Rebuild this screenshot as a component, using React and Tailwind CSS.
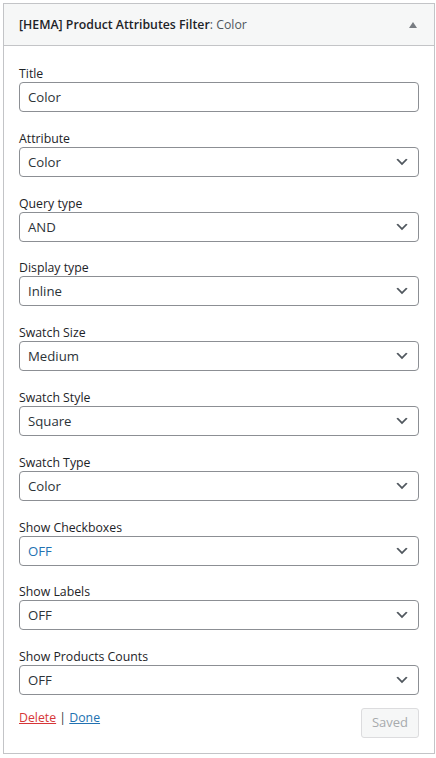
import React from "react";

const fields = [
  { label: "Title", value: "Color", input: true },
  { label: "Attribute", value: "Color" },
  { label: "Query type", value: "AND" },
  { label: "Display type", value: "Inline" },
  { label: "Swatch Size", value: "Medium" },
  { label: "Swatch Style", value: "Square" },
  { label: "Swatch Type", value: "Color" },
  { label: "Show Checkboxes", value: "OFF", active: true },
  { label: "Show Labels", value: "OFF" },
  { label: "Show Products Counts", value: "OFF" },
];

const Chevron = () => (
  <svg width="16" height="16" viewBox="0 0 20 20" className="fill-[#50575e]">
    <path d="M5 6l5 5 5-5 2 1-7 7-7-7 2-1z" />
  </svg>
);

const Field = ({ label, value, input, active }) => (
  <div className="flex flex-col">
    <label className="h-[18px] leading-[20px] text-[12.3px] text-[#1d2327]">{label}</label>
    <div className="h-[30px] flex items-center justify-between border border-[#8c8f94] rounded-[4px] bg-white pl-2 pr-2">
      <span className={`pt-[2px] text-[13.2px] ${active ? "text-[#2271b1]" : "text-[#2c3338]"}`}>{value}</span>
      {!input && <Chevron />}
    </div>
  </div>
);

export default function App() {
  return (
    <div className="bg-white min-h-[758px] pt-[3px] px-[3px] font-['Open_Sans',sans-serif]">
      <div className="border border-[#c3c4c7] bg-white w-[432px]">
        <div className="h-[42px] bg-[#f6f7f7] border-b border-[#c3c4c7] flex items-center justify-between pl-[15px] pr-[17px]">
          <h3 className="pt-[1px] text-[12.3px] text-[#1d2327]">
            <span className="font-semibold">[HEMA] Product Attributes Filter</span>
            <span className="text-[#50575e]">: Color</span>
          </h3>
          <svg width="8" height="6" viewBox="0 0 8 6" className="fill-[#787c82]">
            <path d="M4 0L8 6H0z" />
          </svg>
        </div>
        <div className="px-[15px] pt-[18px] pb-[15px]">
          <div className="flex flex-col gap-[16.8px]">
            {fields.map((f) => (
              <Field key={f.label} {...f} />
            ))}
          </div>
          <div className="flex items-start justify-between mt-[13px]">
            <div className="pt-[1px] text-[12.3px] text-[#2c3338]">
              <a href="#" className="text-[#d63638] underline">Delete</a>
              {" | "}
              <a href="#" className="text-[#2271b1] underline">Done</a>
            </div>
            <button className="h-[30px] px-[10px] text-[13px] text-[#a7aaad] bg-[#f6f7f7] border border-[#dcdcde] rounded-[3px]">
              Saved
            </button>
          </div>
        </div>
      </div>
    </div>
  );
}
